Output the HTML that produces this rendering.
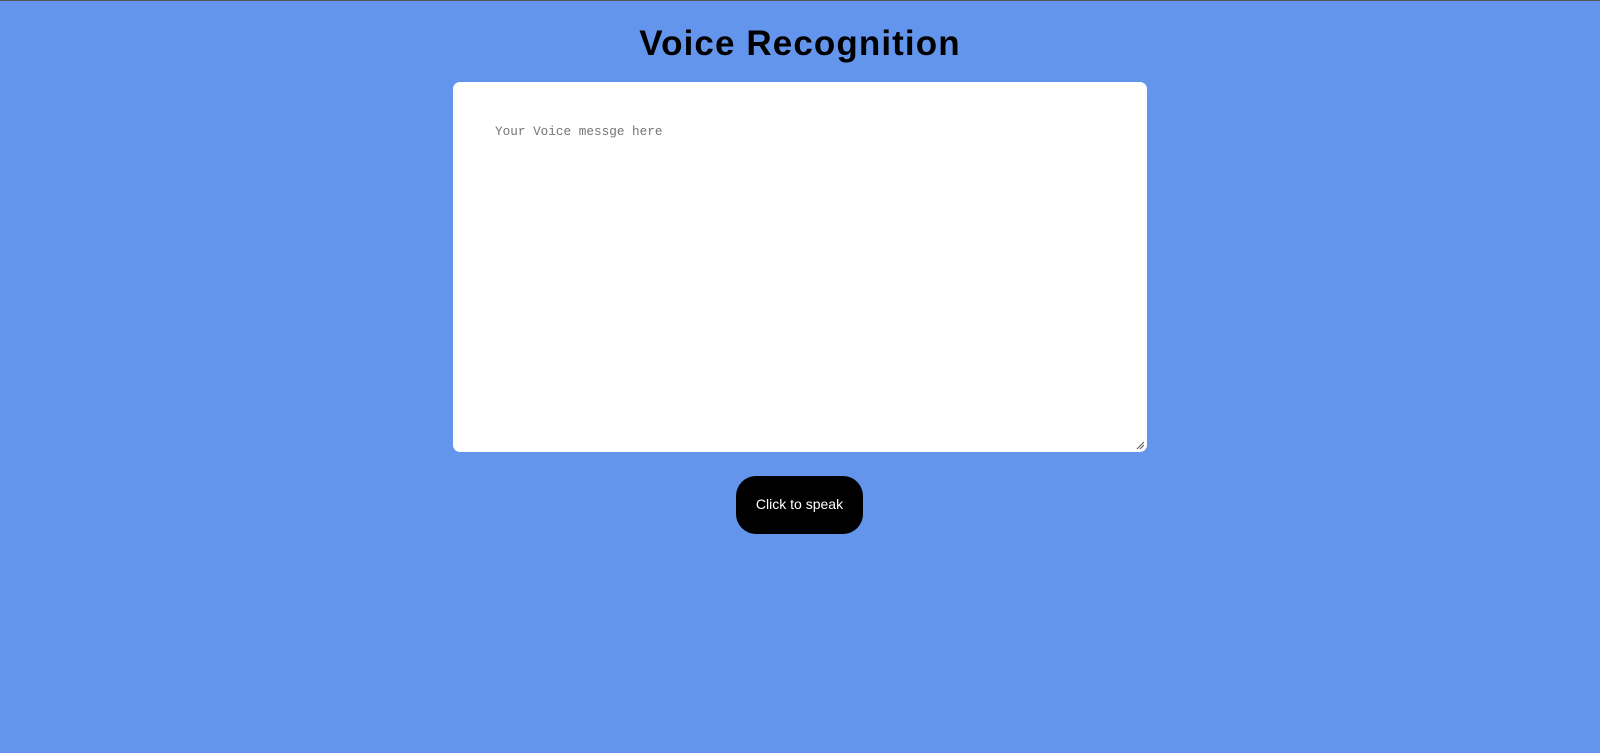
<!DOCTYPE html>
<html><head><style>
html,body{margin:0;padding:0;}
body{width:1600px;height:753px;background:#6495ed;border-top:1px solid #555;box-sizing:border-box;position:relative;overflow:hidden;font-family:"Liberation Sans",Arial,sans-serif;}
h1{position:absolute;top:21px;left:0;width:1600px;margin:0;text-align:center;font-size:35px;font-weight:bold;letter-spacing:1.1px;color:#000;line-height:44px;}
.ta{position:absolute;left:453px;top:81px;width:694px;height:370px;background:#fff;border-radius:7px;}
.ph{position:absolute;left:42px;top:42px;font-family:"Liberation Mono",monospace;font-size:12.7px;color:#757575;}
.grip{position:absolute;right:3px;bottom:3px;width:8px;height:8px;}
.btn{position:absolute;left:736px;top:475px;width:127px;height:58px;background:#000;border-radius:20px;color:#fff;font-size:14px;text-align:center;line-height:56px;}
</style></head><body>
<h1>Voice Recognition</h1>
<div class="ta"><div class="ph">Your Voice messge here</div>
<svg class="grip" viewBox="0 0 8 8"><path d="M1 8L8 1M4 8L8 4" stroke="#555" stroke-width="1"/></svg></div>
<div class="btn">Click to speak</div>
</body></html>
